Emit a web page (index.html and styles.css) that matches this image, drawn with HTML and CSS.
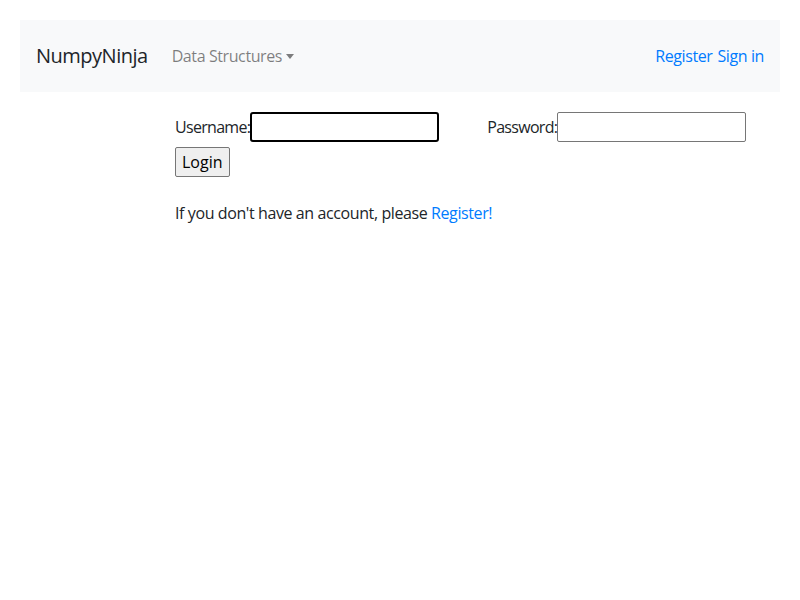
FILE: index.html
```html
<!DOCTYPE html>
<html lang="en">
<head>
<meta charset="utf-8">
<title>NumpyNinja</title>
<link rel="stylesheet" href="styles.css">
</head>
<body>
<div class="page">
  <nav class="navbar">
    <a class="brand" href="#">NumpyNinja</a>
    <a class="dropdown" href="#">Data Structures<span class="caret"></span></a>
    <div class="right">
      <a href="#">Register</a>
      <a href="#">Sign in</a>
    </div>
  </nav>
  <main class="content">
    <form class="login">
      <div class="row">
        <div class="field">
          <label>Username:</label><input type="text" class="focused">
        </div>
        <div class="field">
          <label>Password:</label><input type="password">
        </div>
      </div>
      <button type="button" class="btn">Login</button>
    </form>
    <p class="note">If you don't have an account, please <a href="#">Register!</a></p>
  </main>
</div>
</body>
</html>
```
FILE: styles.css
```css
* { box-sizing: border-box; }
html, body { margin: 0; padding: 0; background: #fff; }
body {
  font-family: "Open Sans", "Noto Sans", sans-serif;
  font-size: 16px;
  line-height: 1.5;
  letter-spacing: -0.4px;
  color: #212529;
}
a { color: #007bff; text-decoration: none; }
.page { padding: 20px; }
.navbar {
  display: flex;
  align-items: center;
  height: 72px;
  background: #f8f9fa;
  padding: 0 16px;
}
.brand {
  color: #212529;
  font-size: 20px;
  letter-spacing: -0.5px;
  margin-right: 24px;
}
.dropdown {
  color: rgba(0,0,0,.5);
  display: flex;
  align-items: center;
}
.caret {
  display: inline-block;
  margin-left: 4px;
  border-top: 5px solid rgba(0,0,0,.5);
  border-left: 4px solid transparent;
  border-right: 4px solid transparent;
}
.right { margin-left: auto; display: flex; gap: 5px; }
.content { padding-left: 155px; padding-top: 20px; }
.row { display: flex; gap: 48px; }
.field { display: flex; align-items: center; }
.field label { letter-spacing: -0.7px; }
input {
  width: 189px;
  height: 30px;
  font: inherit;
  border: 1px solid #767676;
  border-radius: 2px;
  padding: 1px 2px;
}
input.focused { border: 2px solid #000; border-radius: 3px; }
.btn {
  margin-top: 5px;
  height: 30px;
  font: inherit;
  padding: 0 6px;
  background: #efefef;
  border: 1px solid #767676;
  border-radius: 2px;
  color: #000;
}
.note { margin: 24px 0 0; }
```
